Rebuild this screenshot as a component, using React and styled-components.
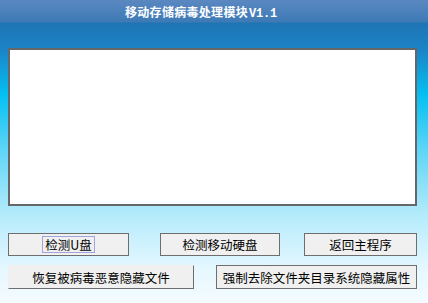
import React from "react";
import styled, { createGlobalStyle } from "styled-components";

const GlobalStyle = createGlobalStyle`
    html, body {
        margin: 0;
        padding: 0;
    }
    body {
        font-family: "Noto Sans CJK SC", "Liberation Sans", sans-serif;
    }
`

const Window = styled.div`
    width: 428px;
    height: 303px;
    display: flex;
    flex-direction: column;
    background: linear-gradient(
        to bottom,
        #5b88c1 0px,
        #3d7ab6 22px,
        #1f74b4 23px,
        #1b84c7 50px,
        #04c0f2 95px,
        #5fd5f7 150px,
        #b4ebfb 215px,
        #e6f8ff 270px,
        #f4fbff 303px
    );
    overflow: hidden;
`

const TitleBar = styled.div`
    height: 23px;
    display: flex;
    align-items: center;
    padding-left: 125px;
    padding-top: 3px;
    box-sizing: border-box;
    color: #FFFFFF;
    white-space: nowrap;
`

const TitleText = styled.span`
    font-family: "Noto Sans CJK SC", sans-serif;
    font-weight: bold;
    font-size: 12px;
    letter-spacing: 0.3px;
    line-height: 16px;
`

const Version = styled.span`
    font-family: "Liberation Mono", monospace;
    font-size: 12px;
    letter-spacing: -0.2px;
    margin-left: 1px;
`

const Content = styled.div`
    padding: 25px 11px 0 8px;
    display: flex;
    flex-direction: column;
`

const LogBox = styled.textarea`
    width: 409px;
    height: 158px;
    box-sizing: border-box;
    margin: 0;
    border: 2px solid #676767;
    background: #FFFFFF;
    resize: none;
    outline: none;
    font-size: 12px;
`

const ButtonRow = styled.div`
    display: flex;
    flex-direction: row;
    margin-top: ${(p) => p.top}px;
`

const Button = styled.button`
    width: ${(p) => p.w}px;
    height: ${(p) => p.h || 24}px;
    margin: 0 0 0 ${(p) => p.left || 0}px;
    padding: 0;
    box-sizing: border-box;
    background: #f0f0f0;
    border: 1px solid #6e6e6e;
    ${(p) => p.flatTopLeft && `
        border-top-color: #f0f0f0;
        border-left-color: #f0f0f0;
    `}
    display: flex;
    align-items: center;
    justify-content: center;
    color: #000000;
    font-family: "Noto Sans CJK SC", sans-serif;
    font-size: 12.5px;
    cursor: pointer;
`

const FocusRing = styled.span`
    border: 1px solid #a3a3dc;
    padding: 0 2px;
    line-height: 15px;
`

function App() {
    return (
        <>
            <GlobalStyle />
            <Window>
                <TitleBar>
                    <TitleText>
                        移动存储病毒处理模块<Version>V1.1</Version>
                    </TitleText>
                </TitleBar>
                <Content>
                    <LogBox readOnly />
                    <ButtonRow top={27}>
                        <Button w={121} h={23}><FocusRing>检测U盘</FocusRing></Button>
                        <Button w={120} h={23} left={31}>检测移动硬盘</Button>
                        <Button w={113} h={23} left={24}>返回主程序</Button>
                    </ButtonRow>
                    <ButtonRow top={9}>
                        <Button w={186} flatTopLeft>恢复被病毒恶意隐藏文件</Button>
                        <Button w={201} left={22}>强制去除文件夹目录系统隐藏属性</Button>
                    </ButtonRow>
                </Content>
            </Window>
        </>
    )
}

export default App;
